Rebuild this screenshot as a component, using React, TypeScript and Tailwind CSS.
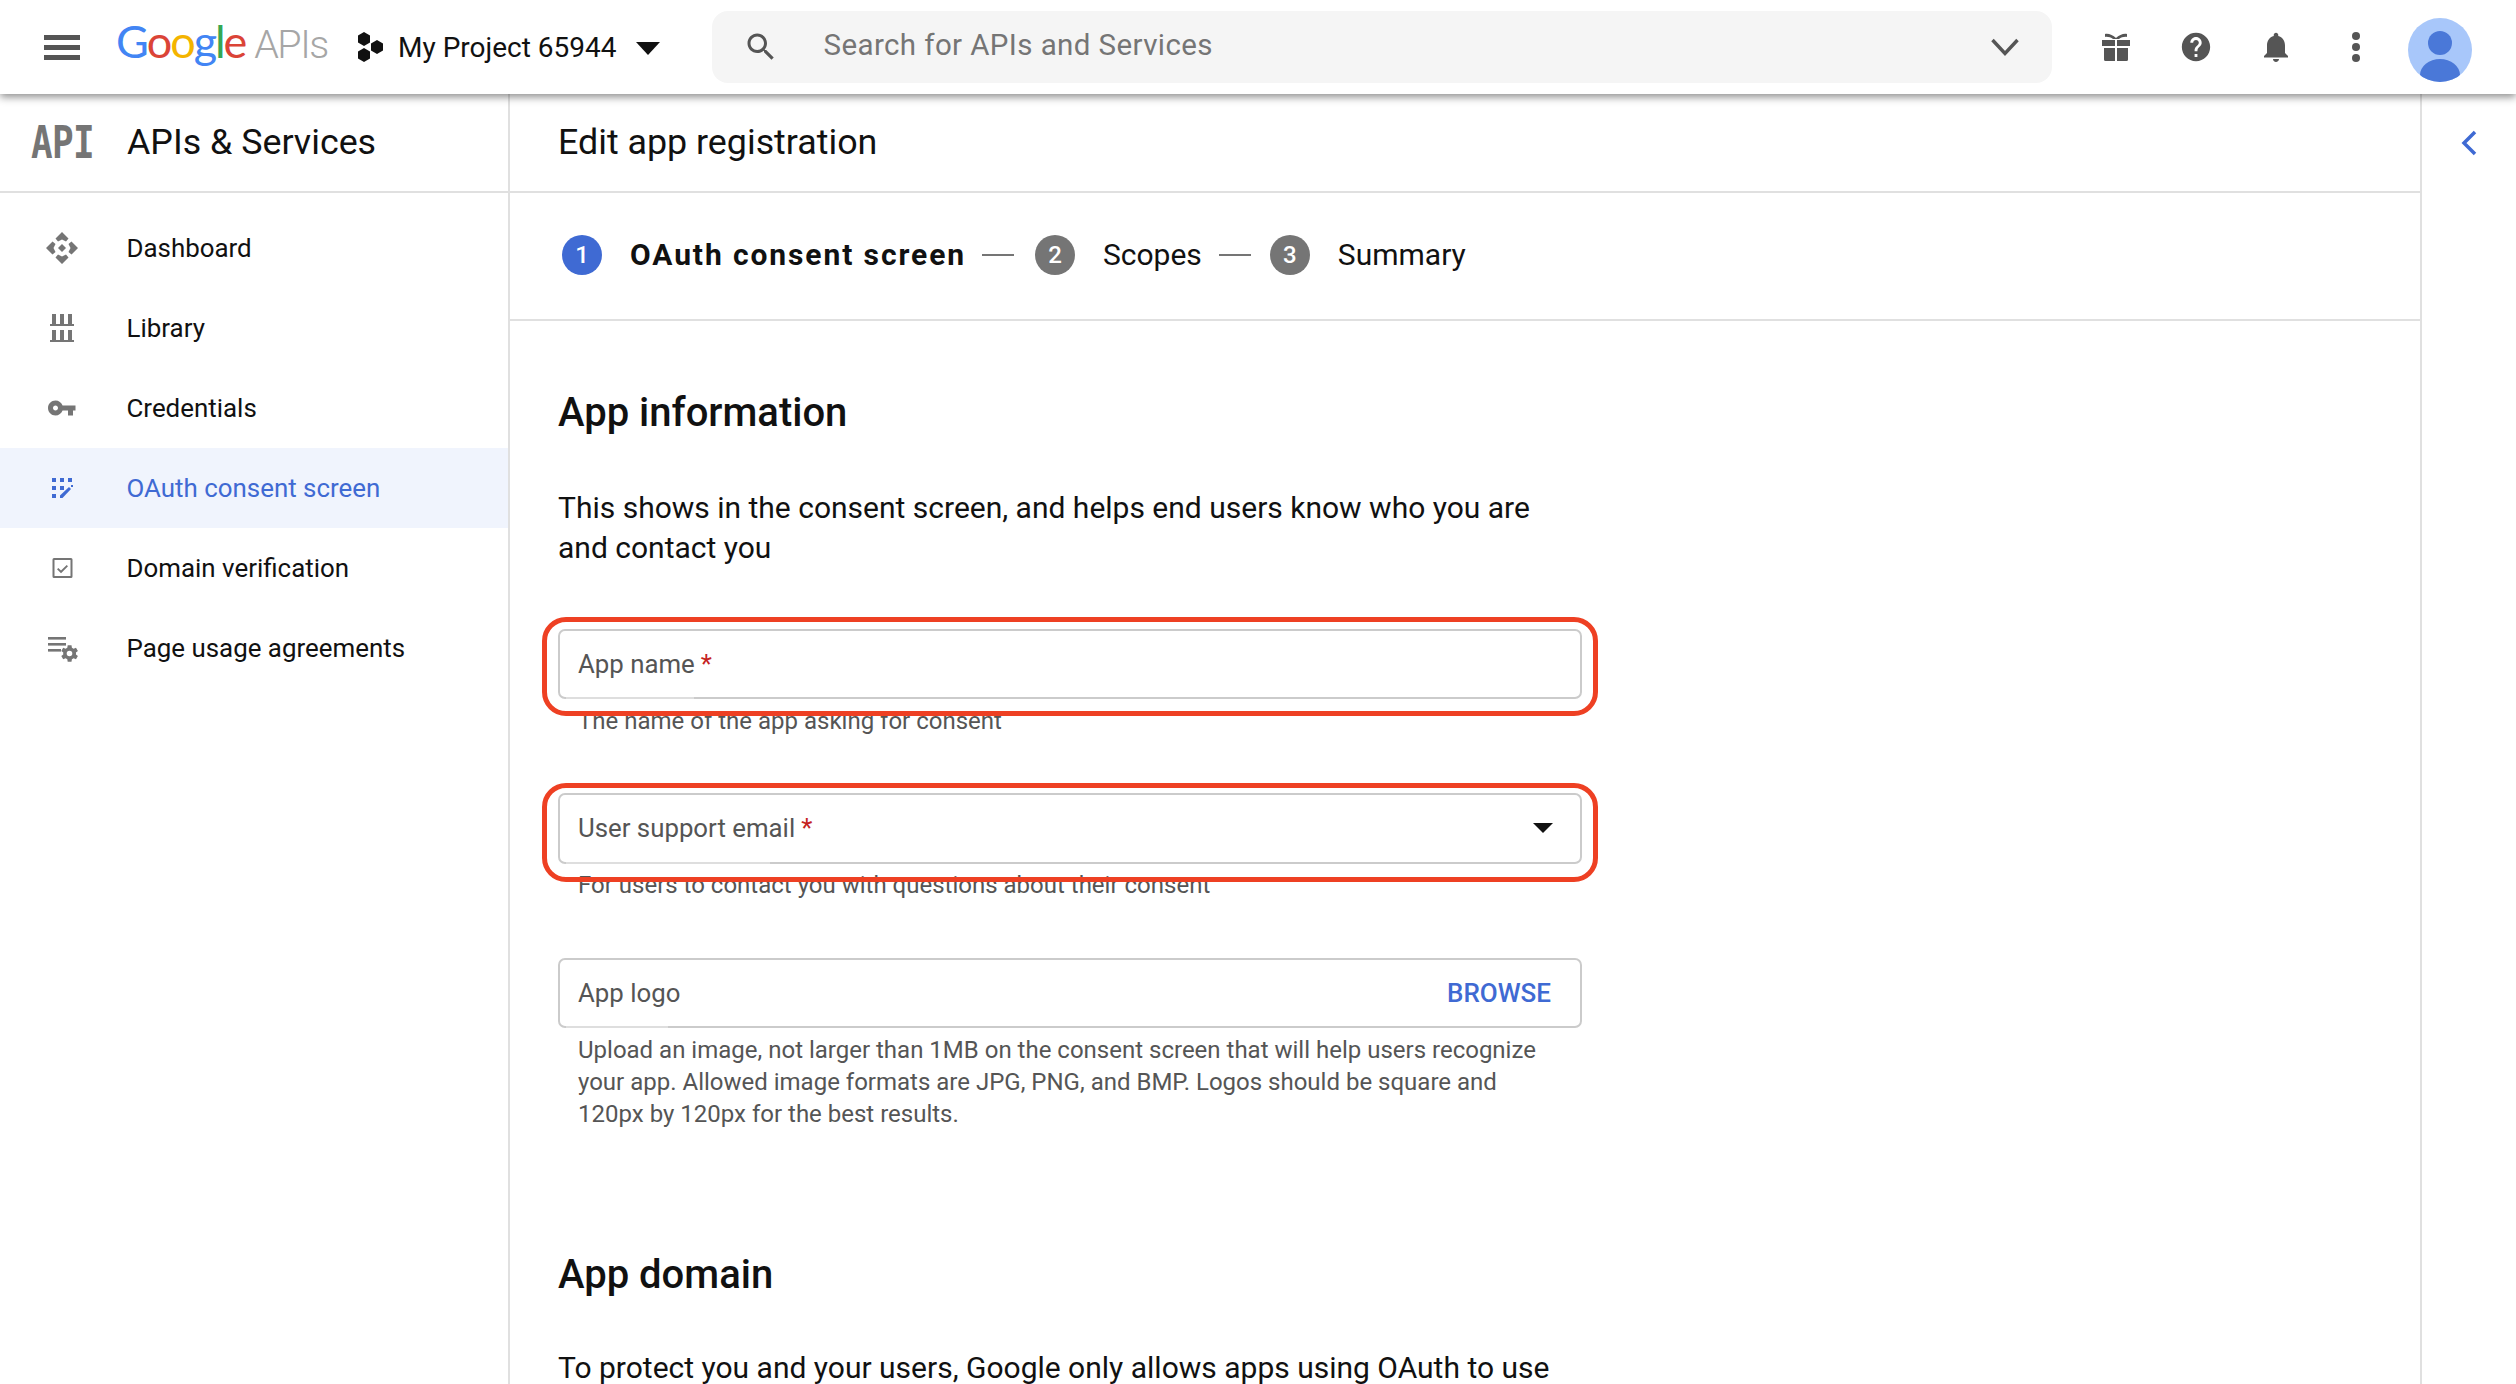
import React from "react";

const Nav = ({ icon, label, active }: { icon: React.ReactNode; label: string; active?: boolean }) => (
  <div className={`flex h-[80px] items-center ${active ? "bg-[#f0f4fd] text-[#3f6ad3]" : "text-[#111]"}`}>
    <div className="ml-[42px] h-[40px] w-[40px] shrink-0">{icon}</div>
    <span className="ml-[44.500px] -mt-[1px] text-[25.900px] leading-[40px]">{label}</span>
  </div>
);

const I = ({ children, color = "#757575" }: { children: React.ReactNode; color?: string }) => (
  <svg width="40" height="40" viewBox="0 0 40 40" fill={color}>{children}</svg>
);

const DashboardIcon = () => (
  <I>
    <path d="M20 4l6.500 6.500-2.500 3-4-2-4 2-2.500-3z" />
    <path d="M20 36l6.500-6.500-2.500-3-4 2-4-2-2.500 3z" />
    <path d="M4 20l6.500-6.500 3 2.500-2 4 2 4-3 2.500z" />
    <path d="M36 20l-6.500-6.500-3 2.500 2 4-2 4 3 2.500z" />
    <path d="M20 16l4 4-4 4-4-4z" />
  </I>
);
const LibraryIcon = () => (
  <I>
    <rect x="10" y="6" width="4" height="10" />
    <rect x="18" y="6" width="4" height="10" />
    <rect x="26" y="6" width="4" height="10" />
    <rect x="8" y="16" width="24" height="2" />
    <rect x="10" y="22" width="4" height="10" />
    <rect x="18" y="22" width="4" height="10" />
    <rect x="26" y="22" width="4" height="10" />
    <rect x="8" y="32" width="24" height="2" />
  </I>
);
const KeyIcon = () => (
  <svg width="40" height="40" viewBox="-3.800 -4 32 32" fill="#757575">
    <path d="M12.650 10C11.830 7.670 9.610 6 7 6c-3.310 0-6 2.690-6 6s2.690 6 6 6c2.610 0 4.830-1.670 5.650-4H17v4h4v-4h2v-4H12.650zM7 14c-1.100 0-2-.900-2-2s.900-2 2-2 2 .900 2 2-.900 2-2 2z" />
  </svg>
);
const OAuthIcon = () => (
  <I color="#3f6ad3">
    <rect x="10" y="10" width="4" height="4" />
    <rect x="18" y="10" width="4" height="4" />
    <rect x="26" y="10" width="4" height="4" />
    <rect x="10" y="18" width="4" height="4" />
    <rect x="18" y="18" width="4" height="4" />
    <rect x="10" y="26" width="4" height="4" />
    <path d="M18 27.500L27 19l2 2-8.500 9H18z" />
    <rect x="29" y="17" width="2" height="2" />
  </I>
);
const DomainIcon = () => (
  <I>
    <path d="M12 10h17a1.500 1.500 0 0 1 1.500 1.500v17a1.500 1.500 0 0 1-1.500 1.500H12a1.500 1.500 0 0 1-1.500-1.500v-17A1.500 1.500 0 0 1 12 10zm.5 2v16h16V12z" fillRule="evenodd" />
    <path d="M19 25.200l-4-4 1.300-1.300 2.700 2.700 5.700-5.700 1.300 1.300z" />
  </I>
);
const PageUsageIcon = () => (
  <svg width="40" height="40" viewBox="0 0 40 40" fill="#757575">
    <rect x="6" y="9" width="18" height="2.600" />
    <rect x="6" y="15" width="18" height="2.600" />
    <rect x="6" y="21" width="13" height="2.600" />
    <path d="M34 25.500c0-.400 0-.700-.100-1l2-1.500-1.900-3.300-2.400 1c-.500-.400-1.100-.700-1.700-1l-.400-2.500h-3.800l-.400 2.500c-.600.300-1.200.600-1.700 1l-2.400-1-1.900 3.300 2 1.500c-.100.300-.100.600-.100 1s0 .700.100 1l-2 1.500 1.900 3.300 2.400-1c.500.400 1.100.700 1.700 1l.400 2.500h3.800l.400-2.500c.600-.300 1.200-.600 1.700-1l2.400 1 1.900-3.300-2-1.500c.100-.300.100-.600.100-1zm-6.500 2.800a2.800 2.800 0 1 1 0-5.600 2.800 2.800 0 0 1 0 5.600z" />
  </svg>
);

const ProjectIcon = () => (
  <svg width="28" height="30" viewBox="0 0 28 30" fill="#111">
    <path d="M7 0l6 3.500v7L7 14l-6-3.500v-7z" />
    <path d="M7 16l6 3.500v7L7 30l-6-3.500v-7z" />
    <path d="M20 8l6 3.500v7L20 22l-6-3.500v-7z" />
  </svg>
);

const TopIcon = ({ children }: { children: React.ReactNode }) => (
  <div className="flex w-[80px] items-center justify-center">{children}</div>
);

const Step = ({ n, label, active }: { n: number; label: string; active?: boolean }) => (
  <div className="flex items-center">
    <div className={`flex h-[40px] w-[40px] items-center justify-center rounded-full text-[24px] font-medium text-white ${active ? "bg-[#3f6ad3]" : "bg-[#757575]"}`}>
      {n}
    </div>
    <span className={`ml-[28px] text-[30px] leading-[40px] text-[#111] ${active ? "font-bold tracking-[1.900px]" : ""}`}>{label}</span>
  </div>
);

const Field = ({ label, required, right, hl, h, notch }: { label: string; required?: boolean; right?: React.ReactNode; hl?: string; h: string; notch: string }) => (
  <div className="relative">
    <div className={`relative flex ${h} items-center justify-between rounded-[7px] border-2 border-[#cbcbcb] pl-[18px] pr-[28px]`}>
      <span className="text-[25.800px] text-[#555]">
        {label}
        {required && <span className="ml-[6px] text-[#c5221f]">*</span>}
      </span>
      {right}
      <div className={`absolute -bottom-[2px] left-[6px] h-[2px] bg-[#dedede] ${notch}`} />
    </div>
    {hl && <div className={`absolute z-10 rounded-[24px] border-[5px] border-[#ee4023] ${hl}`} />}
  </div>
);

export default function App() {
  return (
    <div className="flex h-[1384px] w-[2516px] flex-col overflow-hidden bg-white text-[#111] font-['Roboto',sans-serif]">
      <header className="relative z-20 flex h-[94px] shrink-0 items-center bg-white shadow-[0_3px_8px_rgba(0,0,0,0.45)]">
        <div className="ml-[44px] flex w-[36px] flex-col gap-[5px]">
          <div className="h-[5px] bg-[#555]" />
          <div className="h-[5px] bg-[#555]" />
          <div className="h-[5px] bg-[#555]" />
        </div>
        <div className="ml-[36px] -mt-[8px] flex w-[215px] items-baseline font-['Lato',sans-serif] text-[45px] leading-[50px] tracking-[-2.100px]">
          <span className="text-[#4285f4]">G</span>
          <span className="text-[#db4437]">o</span>
          <span className="text-[#f4b400]">o</span>
          <span className="text-[#4285f4]">g</span>
          <span className="text-[#34a853]">l</span>
          <span className="text-[#db4437]">e</span>
          <span className="ml-[9px] font-['Roboto',sans-serif] font-light tracking-[-1.500px] text-[#a6a6a6] text-[39.500px]">APIs</span>
        </div>
        <div className="ml-[26px]"><ProjectIcon /></div>
        <span className="ml-[13px] mt-[2px] text-[28px] leading-[40px] text-[#111]">My Project 65944</span>
        <svg className="ml-[20px] mt-[2px]" width="24" height="13" viewBox="0 0 24 13" fill="#111"><path d="M0 0h24L12 13z" /></svg>
        <div className="ml-[52px] flex h-[72px] w-[1340px] items-center rounded-[16px] bg-[#f5f5f5]">
          <svg className="ml-[31px]" width="36" height="36" viewBox="0 0 24 24" fill="#555">
            <path d="M15.500 14h-.790l-.280-.270C15.410 12.590 16 11.110 16 9.500 16 5.910 13.090 3 9.500 3S3 5.910 3 9.500 5.910 16 9.500 16c1.610 0 3.090-.590 4.230-1.570l.270.280v.790l5 4.990L20.490 19l-4.990-5zm-6 0C7.010 14 5 11.990 5 9.500S7.010 5 9.500 5 14 7.010 14 9.500 11.990 14 9.500 14z" />
          </svg>
          <span className="ml-[44px] -mt-[3px] text-[29.500px] tracking-[0.400px] text-[#757575]">Search for APIs and Services</span>
          <svg className="ml-auto mr-[33px]" width="28" height="18" viewBox="0 0 28 18" fill="none" stroke="#555" strokeWidth="3.400"><path d="M1.500 2L14 15.500 26.500 2" /></svg>
        </div>
        <div className="ml-[24px] flex">
          <TopIcon>
            <svg width="28" height="28" viewBox="0 0 28 28" fill="#555">
              <path d="M0 7h13v6H0zM15 7h13v6H15zM2 15h11v13H3.500A1.500 1.500 0 0 1 2 26.500zM15 15h11v11.500a1.500 1.500 0 0 1-1.500 1.500H15z" />
              <path d="M3 1c3-1 8 1 11 4 3-3 8-5 11-4v3c-2.500-.500-6 .500-8 2h-6c-2-1.500-5.500-2.500-8-2z" />
            </svg>
          </TopIcon>
          <TopIcon>
            <svg width="34" height="34" viewBox="0 0 24 24" fill="#555">
              <path d="M12 2C6.480 2 2 6.480 2 12s4.480 10 10 10 10-4.480 10-10S17.520 2 12 2zm1 17h-2v-2h2v2zm2.070-7.750l-.900.920C13.450 12.900 13 13.500 13 15h-2v-.500c0-1.100.450-2.100 1.170-2.830l1.240-1.260c.370-.360.590-.860.590-1.410 0-1.100-.900-2-2-2s-2 .900-2 2H8c0-2.210 1.790-4 4-4s4 1.790 4 4c0 .880-.360 1.680-.930 2.250z" />
            </svg>
          </TopIcon>
          <TopIcon>
            <svg width="36" height="36" viewBox="0 0 24 24" fill="#555">
              <path d="M12 22c1.100 0 2-.900 2-2h-4c0 1.100.890 2 2 2zm6-6v-5c0-3.070-1.640-5.640-4.500-6.320V4c0-.830-.670-1.500-1.500-1.500s-1.500.670-1.500 1.500v.680C7.630 5.360 6 7.920 6 11v5l-2 2v1h16v-1l-2-2z" />
            </svg>
          </TopIcon>
          <TopIcon>
            <div className="flex flex-col gap-[3px]">
              <div className="h-[8px] w-[8px] rounded-full bg-[#555]" />
              <div className="h-[8px] w-[8px] rounded-full bg-[#555]" />
              <div className="h-[8px] w-[8px] rounded-full bg-[#555]" />
            </div>
          </TopIcon>
        </div>
        <svg className="ml-[12px] mt-[6px]" width="64" height="64" viewBox="0 0 64 64">
          <defs><clipPath id="av"><circle cx="32" cy="32" r="32" /></clipPath></defs>
          <circle cx="32" cy="32" r="32" fill="#a8c7fa" />
          <g clipPath="url(#av)" fill="#4a78d8">
            <circle cx="32" cy="25" r="12" />
            <ellipse cx="32" cy="57" rx="20" ry="16" />
          </g>
        </svg>
      </header>

      <div className="flex min-h-0 flex-1">
        <aside className="w-[510px] shrink-0 border-r-2 border-[#e0e0e0]">
          <div className="flex h-[99px] items-center border-b-2 border-[#e0e0e0]">
            <span className="ml-[31px] w-[63px] inline-block scale-y-[1.23] text-[36px] font-bold leading-[36px] tracking-[-0.700px] text-[#757575] font-['DejaVu_Sans_Mono',monospace]">API</span>
            <span className="ml-[33px] -mt-[2px] text-[35.800px] leading-[50px] text-[#111]">APIs &amp; Services</span>
          </div>
          <nav className="pt-[15px]">
            <Nav icon={<DashboardIcon />} label="Dashboard" />
            <Nav icon={<LibraryIcon />} label="Library" />
            <Nav icon={<KeyIcon />} label="Credentials" />
            <Nav icon={<OAuthIcon />} label="OAuth consent screen" active />
            <Nav icon={<DomainIcon />} label="Domain verification" />
            <Nav icon={<PageUsageIcon />} label="Page usage agreements" />
          </nav>
        </aside>

        <main className="w-[1912px] min-w-0 shrink-0 border-r-2 border-[#e0e0e0]">
          <div className="flex h-[99px] items-center border-b-2 border-[#e0e0e0] pl-[48px]">
            <h1 className="-mt-[2px] text-[35.800px] font-normal leading-[50px] text-[#111]">Edit app registration</h1>
          </div>
          <div className="flex h-[128px] items-center border-b-2 border-[#e0e0e0] pb-[2px] pl-[52px]">
            <Step n={1} label="OAuth consent screen" active />
            <div className="ml-[16px] mr-[21px] h-[2px] w-[32px] bg-[#757575]" />
            <Step n={2} label="Scopes" />
            <div className="ml-[17px] mr-[19px] h-[2px] w-[32px] bg-[#757575]" />
            <Step n={3} label="Summary" />
          </div>

          <div className="w-[1072px] pl-[48px]">
            <h2 className="mt-[67px] text-[40px] font-medium leading-[50px] text-[#111]">App information</h2>
            <p className="mt-[50px] text-[30px] leading-[40px] text-[#111]">
              This shows in the consent screen, and helps end users know who you are
              <br />
              and contact you
            </p>
            <div className="mt-[61px]">
              <Field label="App name" required h="h-[70px]" notch="w-[128px]" hl="-left-[16px] -right-[16px] -top-[12px] -bottom-[17px]" />
              <p className="ml-[20px] mt-[6px] text-[24px] leading-[32px] text-[#555]">The name of the app asking for consent</p>
            </div>
            <div className="mt-[56px]">
              <Field
                label="User support email"
                required
                h="h-[71px]"
                notch="w-[204px]"
                hl="-left-[16px] -right-[16px] -top-[10px] -bottom-[18px]"
                right={<svg width="20" height="10" viewBox="0 0 20 10" fill="#111" className="-mr-[1px] -mt-[2px]"><path d="M0 0h20L10 10z" /></svg>}
              />
              <p className="ml-[20px] mt-[5px] text-[24px] leading-[32px] text-[#555]">For users to contact you with questions about their consent</p>
            </div>
            <div className="mt-[57px]">
              <Field label="App logo" h="h-[70px]" notch="w-[102px]" right={<span className="mr-[1px] text-[26px] font-medium text-[#3f6ad3]">BROWSE</span>} />
              <p className="ml-[20px] mt-[6px] text-[24px] leading-[32px] text-[#555]">
                Upload an image, not larger than 1MB on the consent screen that will help users recognize
                <br />
                your app. Allowed image formats are JPG, PNG, and BMP. Logos should be square and
                <br />
                120px by 120px for the best results.
              </p>
            </div>
            <h2 className="mt-[120px] text-[40px] font-medium leading-[50px] text-[#111]">App domain</h2>
            <p className="mt-[53px] text-[30px] leading-[30px] text-[#111]">To protect you and your users, Google only allows apps using OAuth to use</p>
          </div>
        </main>

        <div className="flex flex-1 justify-center pt-[36px]">
          <svg width="18" height="26" viewBox="0 0 18 26" fill="none" stroke="#3f6ad3" strokeWidth="3.500"><path d="M15 2L4 13l11 11" /></svg>
        </div>
      </div>
    </div>
  );
}
